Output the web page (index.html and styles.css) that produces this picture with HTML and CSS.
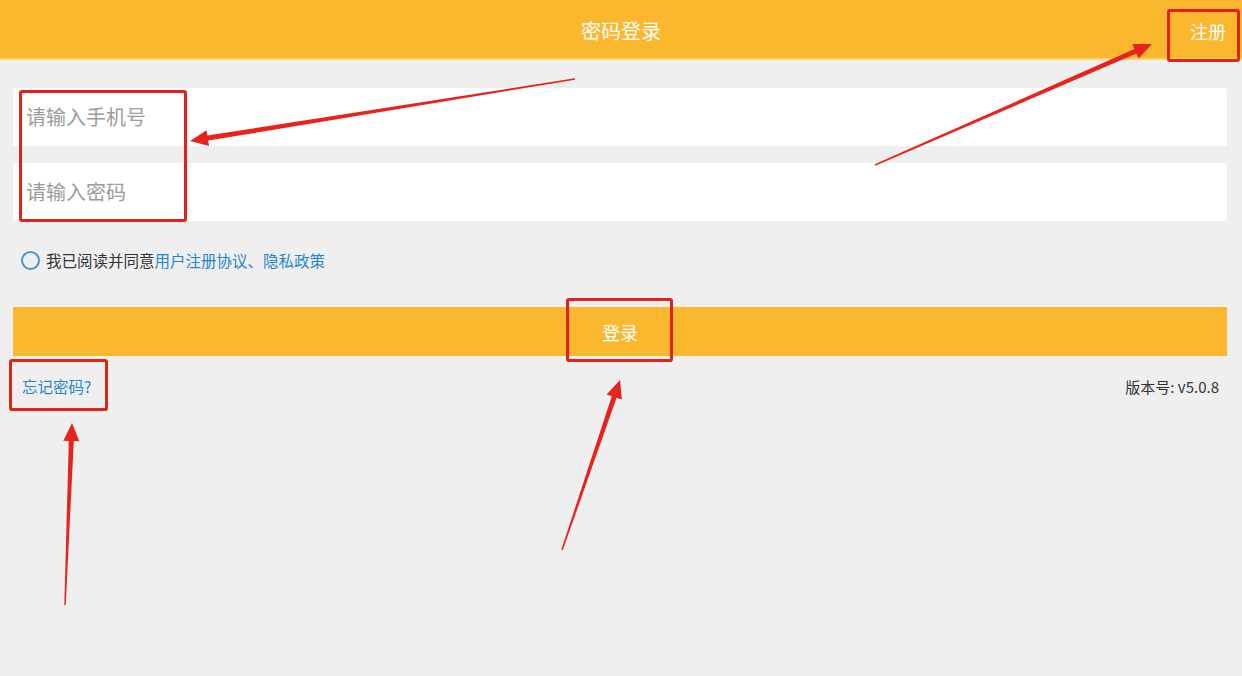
FILE: index.html
```html
<!DOCTYPE html>
<html lang="zh-CN">
<head>
<meta charset="utf-8">
<title>密码登录</title>
<link rel="stylesheet" href="styles.css">
</head>
<body>
<div class="page">
  <header class="topbar">
    <div class="title">密码登录</div>
    <div class="reg">注册</div>
  </header>
  <main class="content">
    <div class="field"><span class="ph">请输入手机号</span></div>
    <div class="field"><span class="ph">请输入密码</span></div>
    <div class="agree">
      <span class="radio"></span>
      <span class="agree-text">我已阅读并同意<span class="link">用户注册协议、隐私政策</span></span>
    </div>
    <div class="btn">登录</div>
    <div class="foot">
      <span class="link forgot">忘记密码?</span>
      <span class="ver">版本号: v5.0.8</span>
    </div>
  </main>

  <div class="anno box-inputs"></div>
  <div class="anno box-reg"></div>
  <div class="anno box-login"></div>
  <div class="anno box-forgot"></div>
  <svg class="arrows" width="1242" height="676" viewBox="0 0 1242 676">
    <g fill="#e8231c">
      <polygon points="575.1,79.7 208.2,140.6 209.1,146.0 190,141 206.5,130.2 207.4,135.6 574.9,78.3"/>
      <polygon points="875.3,165.7 1136.5,53.5 1138.7,58.5 1152,44 1132.3,43.9 1134.5,48.9 874.7,164.3"/>
      <polygon points="65.7,605 73.8,441.1 79.3,441.3 72,423 63.3,440.7 68.8,440.9 64.3,605"/>
      <polygon points="562.7,550.2 616.6,397.8 621.8,399.6 620,380 606.6,394.4 611.8,396.2 561.3,549.8"/>
    </g>
  </svg>
</div>
</body>
</html>
```

FILE: styles.css
```css
html, body {
  margin: 0;
  padding: 0;
}
body {
  background: #efeff0;
  font-family: "Noto Sans CJK SC", "Noto Sans", sans-serif;
}
.page {
  position: relative;
  width: 1242px;
  height: 676px;
  overflow: hidden;
}
.topbar {
  height: 58px;
  background: #fbb72e;
  border-bottom: 2px solid #f8cf7a;
  display: flex;
  align-items: center;
  justify-content: center;
  position: relative;
}
.title {
  color: #fff;
  font-size: 20px;
  line-height: 1;
  margin-top: 3px;
}
.reg {
  position: absolute;
  right: 16px;
  top: 20px;
  color: #fff;
  font-size: 18px;
  line-height: 22px;
}
.content {
  padding: 28px 15px 0 13px;
  display: flex;
  flex-direction: column;
}
.field {
  height: 58px;
  background: #fff;
  border-radius: 3px;
  display: flex;
  align-items: center;
  padding-left: 13px;
  margin-bottom: 17px;
}
.field + .field {
  margin-bottom: 0;
}
.ph {
  color: #9b9b9b;
  font-size: 20px;
  line-height: 1;
}
.agree {
  margin-top: 29px;
  height: 20px;
  display: flex;
  align-items: center;
  padding-left: 8px;
  font-size: 15.5px;
  color: #333;
}
.radio {
  width: 15px;
  height: 15px;
  border: 2px solid #4a95d6;
  border-radius: 50%;
  margin-right: 6px;
  flex: none;
}
.link {
  color: #1f86d0;
}
.btn {
  margin-top: 37px;
  height: 49px;
  background: #fbb72e;
  color: #fff;
  font-size: 18px;
  display: flex;
  align-items: center;
  justify-content: center;
}
.foot {
  margin-top: 20px;
  height: 20px;
  display: flex;
  justify-content: space-between;
  align-items: center;
  padding: 0 8px 0 9px;
}
.forgot {
  font-size: 15.5px;
}
.ver {
  font-size: 15px;
  color: #333;
}
.anno {
  position: absolute;
  border: 3px solid #e3211b;
  border-radius: 3px;
  box-sizing: border-box;
}
.box-inputs { left: 19px; top: 90px; width: 168px; height: 132px; }
.box-reg { left: 1167px; top: 9px; width: 73px; height: 53px; }
.box-login { left: 566px; top: 298px; width: 107px; height: 64px; }
.box-forgot { left: 9px; top: 359px; width: 99px; height: 52px; }
.arrows {
  position: absolute;
  left: 0;
  top: 0;
  pointer-events: none;
}
```
